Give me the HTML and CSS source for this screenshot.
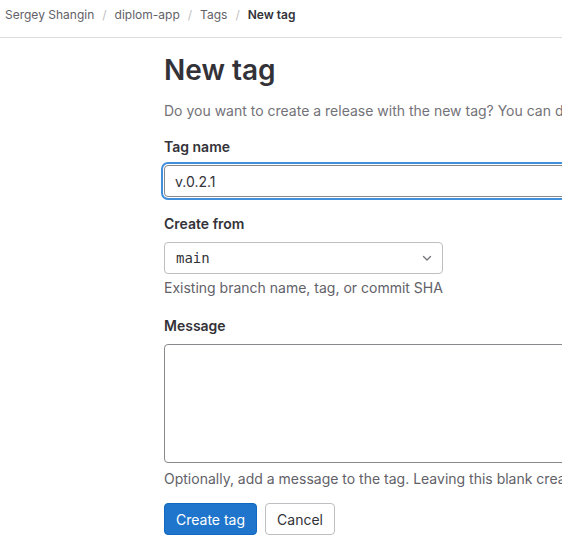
FILE: index.html
```html
<!DOCTYPE html>
<html lang="en">
<head>
<meta charset="utf-8">
<title>New tag</title>
<link rel="stylesheet" href="styles.css">
</head>
<body>
<nav class="breadcrumbs">
  <a class="crumb" href="#">Sergey Shangin</a>
  <span class="sep">/</span>
  <a class="crumb" href="#">diplom-app</a>
  <span class="sep">/</span>
  <a class="crumb" href="#">Tags</a>
  <span class="sep">/</span>
  <span class="crumb current">New tag</span>
</nav>
<main class="content">
  <h1 class="title">New tag</h1>
  <p class="lead">Do you want to create a release with the new tag? You can do that in the New release page.</p>
  <div class="field field-name">
    <label class="label" for="tag">Tag name</label>
    <input id="tag" class="input focused" type="text" value="v.0.2.1">
  </div>
  <div class="field field-ref">
    <label class="label">Create from</label>
    <button class="select" type="button">
      <span class="mono">main</span>
      <svg class="chevron" width="16" height="16" viewBox="0 0 16 16"><path d="M4.5 6.5 8 10l3.5-3.5" fill="none" stroke="#737278" stroke-width="1.3" stroke-linecap="round" stroke-linejoin="round"/></svg>
    </button>
    <p class="help">Existing branch name, tag, or commit SHA</p>
  </div>
  <div class="field field-msg">
    <label class="label" for="msg">Message</label>
    <textarea id="msg" class="textarea"></textarea>
    <p class="help help-msg">Optionally, add a message to the tag. Leaving this blank creates a lightweight tag.</p>
  </div>
  <div class="actions">
    <button class="btn primary" type="button">Create tag</button>
    <button class="btn" type="button">Cancel</button>
  </div>
</main>
</body>
</html>
```
FILE: styles.css
```css
html, body {
  margin: 0;
  padding: 0;
  background: #fff;
}
body {
  font-family: Inter, "Noto Sans", sans-serif;
  font-size: 14px;
  color: #333238;
  overflow: hidden;
  width: 562px;
  height: 558px;
}
.breadcrumbs {
  height: 38px;
  box-sizing: border-box;
  border-bottom: 1px solid #dcdcde;
  display: flex;
  align-items: center;
  padding: 0 0 9px 5px;
  gap: 8px;
  font-size: 12px;
  white-space: nowrap;
}
.crumb {
  color: #626168;
  text-decoration: none;
}
.crumb.current {
  color: #333238;
  font-weight: 600;
}
.sep {
  color: #bfbfc3;
}
.content {
  padding-left: 164px;
  width: 760px;
}
.title {
  font-size: 28px;
  font-weight: 600;
  line-height: 36px;
  margin: 14px 0 0;
}
.lead {
  margin: 13px 0 0;
  color: #737278;
  white-space: nowrap;
  line-height: 20px;
}
.field-name {
  margin-top: 16px;
}
.field-ref {
  margin-top: 17px;
}
.field-msg {
  margin-top: 18px;
}
.label {
  display: block;
  font-weight: 600;
  line-height: 20px;
  margin-bottom: 8px;
}
.input {
  display: block;
  box-sizing: border-box;
  width: 100%;
  height: 32px;
  border: 1px solid #89888d;
  border-radius: 4px;
  padding: 0 10px;
  font: inherit;
  color: #333238;
  outline: none;
}
.input.focused {
  box-shadow: 0 0 0 1px #fff, 0 0 0 3px #428fdc;
}
.select {
  display: flex;
  align-items: center;
  justify-content: space-between;
  box-sizing: border-box;
  width: 279px;
  height: 32px;
  border: 1px solid #bfbfc3;
  border-radius: 4px;
  background: #fff;
  padding: 0 7px 0 11px;
  color: #333238;
}
.mono {
  font-family: "DejaVu Sans Mono", "Liberation Mono", monospace;
  font-size: 14px;
}
.help {
  margin: 4px 0 0;
  color: #626168;
  line-height: 20px;
  white-space: nowrap;
}
.help-msg {
  margin-top: 6px;
}
.textarea {
  display: block;
  box-sizing: border-box;
  width: 100%;
  height: 119px;
  border: 1px solid #89888d;
  border-radius: 4px;
  resize: none;
  font: inherit;
}
.actions {
  display: flex;
  gap: 8px;
  margin-top: 14px;
}
.btn {
  height: 32px;
  box-sizing: border-box;
  padding: 0 11px;
  border: 1px solid #bfbfc3;
  border-radius: 4px;
  background: #fff;
  color: #333238;
  font: inherit;
}
.btn.primary {
  background: #1f75cb;
  border-color: #1068bf;
  color: #fff;
}
```
